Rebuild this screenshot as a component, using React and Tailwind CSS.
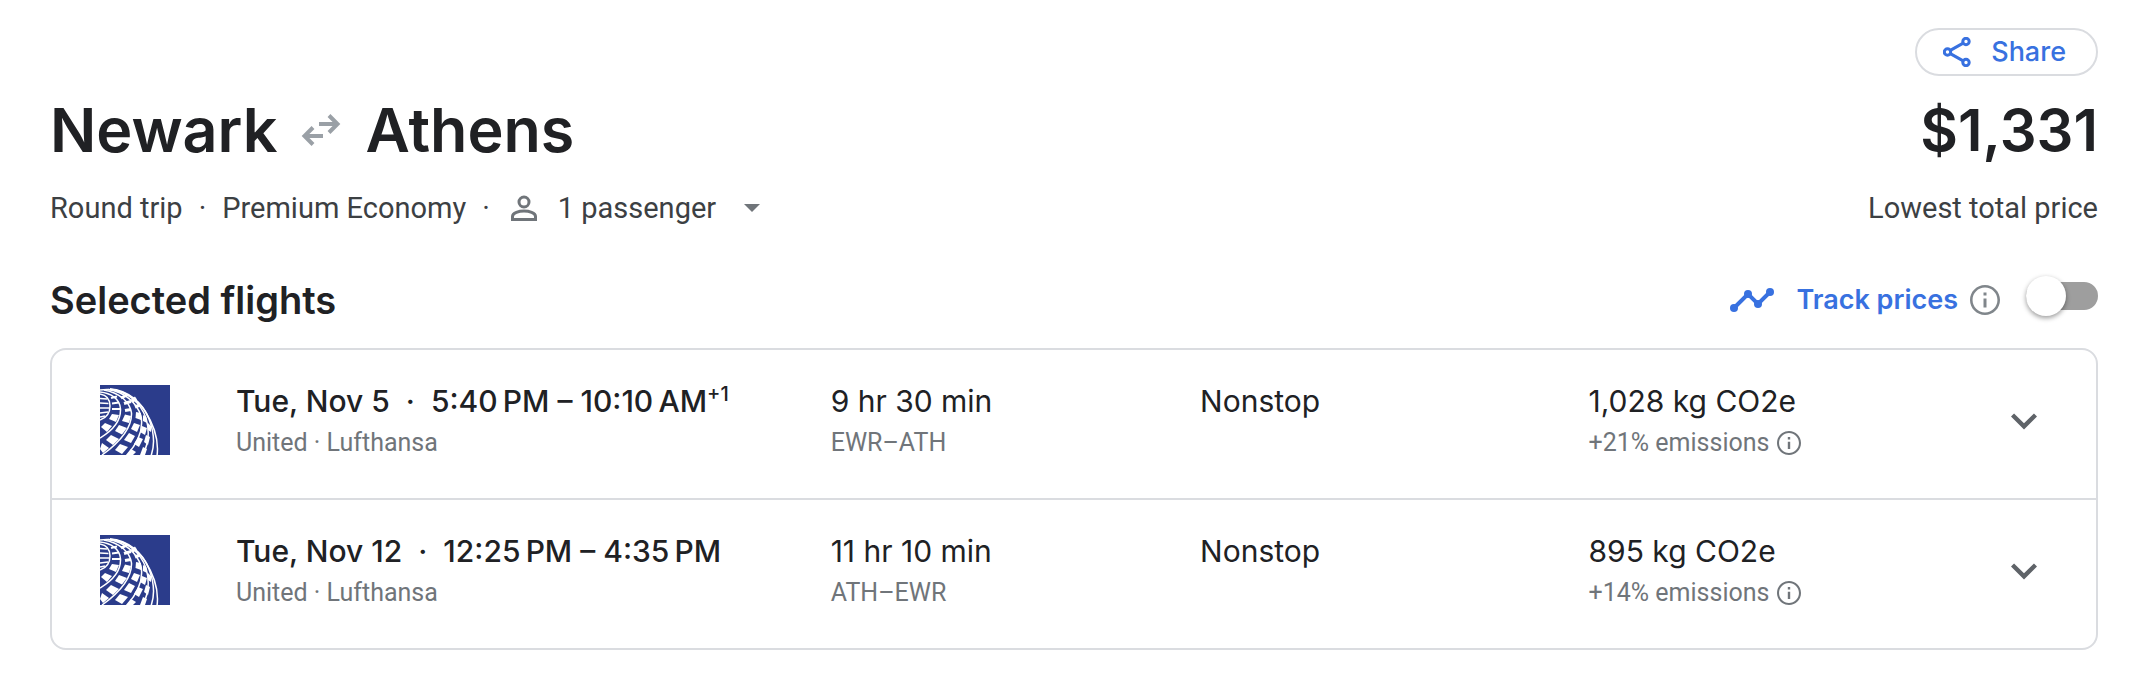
import { useState } from "react";

const flights = [
  {
    date: "Tue, Nov 5",
    time: "5:40\u202fPM – 10:10\u202fAM",
    plus: "+1",
    carriers: "United · Lufthansa",
    duration: "9 hr 30 min",
    route: "EWR–ATH",
    stops: "Nonstop",
    co2: "1,028 kg CO2e",
    emissions: "+21% emissions",
  },
  {
    date: "Tue, Nov 12",
    time: "12:25\u202fPM – 4:35\u202fPM",
    plus: "",
    carriers: "United · Lufthansa",
    duration: "11 hr 10 min",
    route: "ATH–EWR",
    stops: "Nonstop",
    co2: "895 kg CO2e",
    emissions: "+14% emissions",
  },
];

function UnitedLogo() {
  return (
    <svg viewBox="0 0 70 70" className="size-[70px]" role="img" aria-label="United">
      <rect width="70" height="70" fill="#2b3c8b" />
      <g fill="none" stroke="#fff" strokeWidth="1.5">
        <path d="M0 5C18 2 35 11 45 26C54 40 59 56 57 71" />
        <path d="M10 4C28 5 43 18 49 34C54 47 55 60 51 71" />
        <path d="M10 4C28 6 41 19 46 33C50 47 49 59 42 71" />
        <path d="M8 4.500C25 7 37 18 41 31C44 46 37 59 26 71" />
        <path d="M4 5C20 8 30 17 31.500 28C32 43 20 57 2 70" />
        <path d="M0 7C11 8 20 14 20.500 24C21 36 12 46 0 53" />
        <path d="M0 9C6 10 10 14 10 21C10 29 6 33 0 35" />
      </g>
      <g fill="none" stroke="#fff">
        <path d="M0 13.500l7 .5M0 18l8.500 .5M0 23h9M0 28l8-1M0 32l5-1" strokeWidth="1.600" />
        <path d="M11 13l6-1.500M12 18.500l7-1M12 24h8" strokeWidth="2.200" />
        <path d="M21 13l6-3M24 18.500l7-2M25 25.500l6-1" strokeWidth="3" />
        <path d="M32 16l4-3M35 22l5-2" strokeWidth="3.500" />
      </g>
      <g fill="#fff">
        <path d="M12 29L19 30L16 37L9 34Z" />
        <path d="M5 38L12 41L7 47L1 42Z" />
        <path d="M25 29.500L31 31L29 38L22 36Z" />
        <path d="M19 40L27 43L22 49.500L15 46Z" />
        <path d="M11 50L19 54L13 60L6 55Z" />
        <path d="M2 58L9 63L3 68L0 64Z" />
        <path d="M36 27L41 28L41 35L35.500 33Z" />
        <path d="M34 38L40 40L37 47L31 44Z" />
        <path d="M29 48L35 51L31 58L24 55Z" />
        <path d="M20 59L28 62L22 69L15 65Z" />
        <path d="M43 30L46 32L47 38L43 36Z" />
        <path d="M42 41L47 43L45 50L40 47Z" />
        <path d="M38 52L43 54L39 62L34 59Z" />
        <path d="M31 64L36 67L33 70H27Z" />
        <path d="M48 38L51 41L51 47L48 45Z" />
        <path d="M46 50L50 52L48 60L44 57Z" />
        <path d="M43 62L47 64L45 70H40Z" />
      </g>
    </svg>
  );
}

function InfoIcon({ className }) {
  return (
    <svg viewBox="2 2 20 20" className={className} fill="currentColor" aria-hidden="true">
      <path d="M11 7h2v2h-2zm0 4h2v6h-2zm1-9C6.480 2 2 6.480 2 12s4.480 10 10 10 10-4.480 10-10S17.520 2 12 2zm0 18.300c-4.600 0-8.300-3.700-8.300-8.300s3.700-8.300 8.300-8.300 8.300 3.700 8.300 8.300-3.700 8.300-8.300 8.300z" />
    </svg>
  );
}

function FlightRow({ flight }) {
  return (
    <li className="flex h-[150px] items-start border-b-2 border-[#dadce0] pt-[33px] pr-12 pl-12 last:h-[148px] last:border-b-0">
      <div className="mt-0.5 w-[136px] shrink-0">
        <UnitedLogo />
      </div>
      <div className="grid grow grid-cols-[594fr_369fr_388fr_411fr] whitespace-nowrap">
        <div>
          <div className="text-[30px] leading-9 font-medium">
            {flight.date}
            <span className="px-4">·</span>
            {flight.time}
            {flight.plus && <sup className="top-0 align-super text-xl leading-none">{flight.plus}</sup>}
          </div>
          <div className="mt-1.5 font-[Roboto] text-[25px] leading-9 text-[#70757a]">{flight.carriers}</div>
        </div>
        <div>
          <div className="text-[30px] leading-9">{flight.duration}</div>
          <div className="mt-1.5 font-[Roboto] text-[25px] leading-9 text-[#70757a]">{flight.route}</div>
        </div>
        <div className="text-[30px] leading-9">{flight.stops}</div>
        <div>
          <div className="text-[30px] leading-9">{flight.co2}</div>
          <div className="mt-1.5 flex items-center gap-2 font-[Roboto] text-[25px] leading-9 text-[#70757a]">
            {flight.emissions}
            <button type="button" aria-label="About emissions">
              <InfoIcon className="size-6" />
            </button>
          </div>
        </div>
      </div>
      <button type="button" aria-label="Flight details" className="mt-4 flex size-12 shrink-0 items-center justify-center text-[#5f6368]">
        <svg viewBox="0 0 24 24" className="size-[52px] shrink-0" fill="currentColor" aria-hidden="true">
          <path d="M16.590 7.590L12 12.170 7.410 7.590 6 9l6 6 6-6z" />
        </svg>
      </button>
    </li>
  );
}

export default function App() {
  const [tracking, setTracking] = useState(false);
  return (
    <main className="min-h-screen bg-white pt-7 pr-12 pb-10 pl-[50px] font-[Inter,sans-serif] text-[#202124]">
      <div className="flex justify-end">
        <button type="button" className="flex h-12 items-center gap-5 rounded-full border-2 border-[#dadce0] pr-[30px] pl-[26px] text-[27px] font-medium text-[#3871e0]">
          <svg viewBox="0 0 28 30" className="h-[30px] w-7" fill="none" stroke="currentColor" strokeWidth="3" aria-hidden="true">
            <circle cx="4.500" cy="15" r="3.200" />
            <circle cx="23" cy="4.500" r="3.200" />
            <circle cx="23" cy="25.500" r="3.200" />
            <path d="M7.300 13.400L20.200 6.100M7.300 16.600L20.200 23.900" />
          </svg>
          Share
        </button>
      </div>

      <header className="mt-3.5 flex items-start justify-between whitespace-nowrap">
        <div>
          <h1 className="flex items-center gap-6 text-[61px] leading-20 font-semibold">
            Newark
            <svg viewBox="0 0 40 32" className="h-8 w-10" fill="none" stroke="#9aa0a6" strokeWidth="4" role="img" aria-label="to and from">
              <path d="M18 10H37M28 1.500L36.500 10L28 18.500M22 22H3M12 13.500L3.500 22L12 30.500" />
            </svg>
            Athens
          </h1>
          <div className="mt-[18px] flex items-center font-[Roboto] text-[29px] leading-10 text-[#3c4043]">
            <span>Round trip</span>
            <span className="px-4">·</span>
            <span>Premium Economy</span>
            <span className="px-4">·</span>
            <button type="button" className="flex items-center">
              <svg viewBox="0 0 28 28" className="ml-1 size-7" fill="none" stroke="#70757a" strokeWidth="3" aria-hidden="true">
                <circle cx="14" cy="8" r="5" />
                <path d="M2.500 25.500V22.500C2.500 18.800 9 17 14 17S25.500 18.800 25.500 22.500V25.500Z" />
              </svg>
              <span className="ml-5">1 passenger</span>
              <svg viewBox="0 0 16 8" className="ml-7 h-2 w-4" fill="#70757a" aria-hidden="true">
                <path d="M0 0H16L8 8Z" />
              </svg>
            </button>
          </div>
        </div>
        <div className="text-right">
          <div className="text-[58px] leading-20 font-semibold">$1,331</div>
          <div className="mt-[18px] font-[Roboto] text-[29px] leading-10 text-[#3c4043]">Lowest total price</div>
        </div>
      </header>

      <section>
        <div className="mt-[38px] mb-3.5 flex h-[68px] items-center justify-between whitespace-nowrap">
          <h2 className="text-[38px] leading-12 font-semibold">Selected flights</h2>
          <div className="flex items-center">
            <svg viewBox="0 0 44 24" className="h-6 w-11" fill="#3871e0" aria-hidden="true">
              <path d="M4 20L18 6L28 16L40 4" fill="none" stroke="#3871e0" strokeWidth="4" />
              <circle cx="4" cy="20" r="4" />
              <circle cx="18" cy="6" r="4" />
              <circle cx="28" cy="16" r="4" />
              <circle cx="40" cy="4" r="4" />
            </svg>
            <label htmlFor="track" className="ml-[22px] text-[27px] font-semibold text-[#3871e0]">Track prices</label>
            <button type="button" aria-label="About price tracking" className="ml-3 text-[#80868b]">
              <InfoIcon className="size-[30px]" />
            </button>
            <input
              id="track"
              type="checkbox"
              role="switch"
              checked={tracking}
              onChange={(e) => setTracking(e.target.checked)}
              className="mb-2 ml-[26px] flex h-7 w-[72px] appearance-none items-center rounded-full bg-[#9e9e9e] before:size-10 before:shrink-0 before:rounded-full before:bg-white before:shadow-[0_2px_5px_rgba(0,0,0,0.4)] checked:justify-end checked:bg-[#3871e0]"
            />
          </div>
        </div>
        <ul className="rounded-2xl border-2 border-[#dadce0]">
          {flights.map((f) => (
            <FlightRow key={f.date} flight={f} />
          ))}
        </ul>
      </section>
    </main>
  );
}
